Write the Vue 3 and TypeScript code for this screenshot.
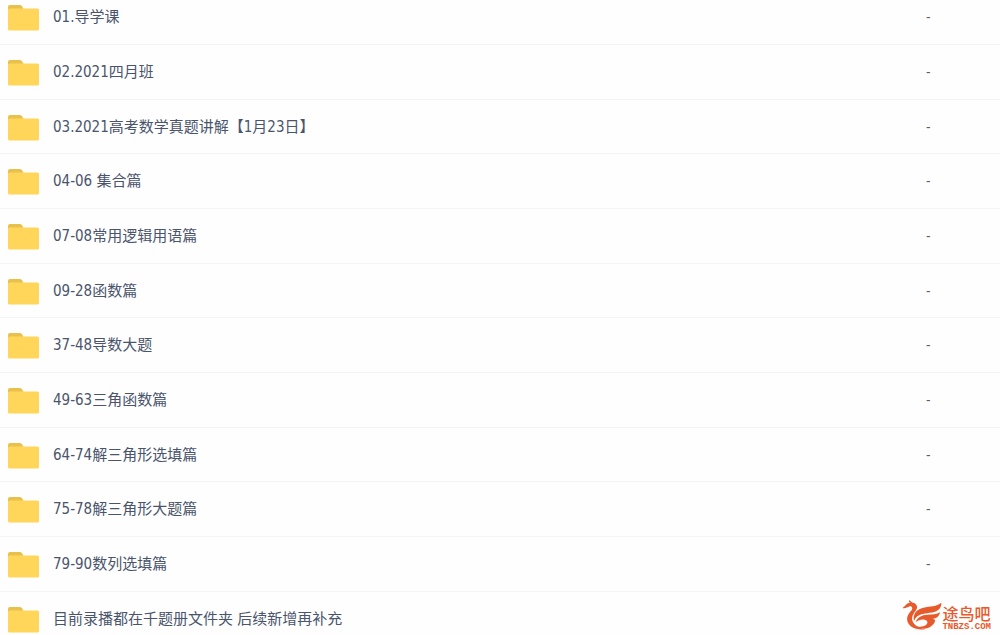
<script setup lang="ts">
interface FileRow {
  name: string
  size: string
}

const rows: FileRow[] = [
  { name: '01.导学课', size: '-' },
  { name: '02.2021四月班', size: '-' },
  { name: '03.2021高考数学真题讲解【1月23日】', size: '-' },
  { name: '04-06 集合篇', size: '-' },
  { name: '07-08常用逻辑用语篇', size: '-' },
  { name: '09-28函数篇', size: '-' },
  { name: '37-48导数大题', size: '-' },
  { name: '49-63三角函数篇', size: '-' },
  { name: '64-74解三角形选填篇', size: '-' },
  { name: '75-78解三角形大题篇', size: '-' },
  { name: '79-90数列选填篇', size: '-' },
  { name: '目前录播都在千题册文件夹 后续新增再补充', size: '' },
]
</script>

<template>
  <main class="page">
    <ul class="list">
      <li v-for="row in rows" :key="row.name" class="row">
        <svg class="folder" viewBox="0 0 32 28" aria-hidden="true">
          <path d="M0 10V4Q0 2 2 2H12Q13.500 2 14.200 3.500L15.500 6V10Z" fill="#e8c04c" />
          <path d="M0 7Q0 5.500 1.500 5.500H29.500Q31 5.500 31 7V26Q31 27.500 29.500 27.500H1.500Q0 27.500 0 26Z" fill="#ffd65a" />
        </svg>
        <span class="name">{{ row.name }}</span>
        <span class="size">{{ row.size }}</span>
      </li>
    </ul>
    <div class="brand">
      <svg class="bird" viewBox="36 28 123 93" aria-hidden="true">
        <g fill="#e65a2c">
          <path d="M37 53C44 49 47 43 53 39C56 37 59 36 62 37C57 35 56 31 60 28C62 33 66 35 71 37C82 41 86 51 79 60C71 70 65 80 68 92C72 106 88 114 108 118C80 123 55 111 52 91C50 77 59 67 66 59C70 53 66 47 59 48C52 49 47 56 37 53Z" />
          <path d="M73 93C68 71 81 57 102 52C123 48 142 49 157 37C158 53 147 64 129 67C106 70 82 70 73 93Z" />
          <path d="M78 97C83 81 97 75 114 74C130 73 143 72 153 66C151 79 141 85 131 86C140 89 139 94 134 101C124 116 103 123 79 110C98 112 112 107 114 98C116 88 93 83 78 97Z" />
        </g>
      </svg>
      <div class="words">
        <span class="title">途鸟吧</span>
        <span class="domain">TNBZS.COM</span>
      </div>
    </div>
  </main>
</template>

<style>
body {
  margin: 0;
  background: #fefefe;
}
</style>

<style scoped>
.page {
  position: relative;
  height: 100vh;
  overflow: hidden;
  font-family: "DejaVu Sans Condensed", "Noto Sans CJK SC", sans-serif;
  color: #4a556c;
}

/* The list is scrolled a little past its first row's top edge. */
.list {
  list-style: none;
  margin: -10px 0 0;
  padding: 0;
}

.row {
  box-sizing: border-box;
  display: flex;
  align-items: center;
  height: 55px;
  padding: 0 8px;
  border-bottom: 1px solid #f3f4f6;
}

.row:nth-child(3n) {
  height: 54px;
}

.folder {
  flex: none;
  width: 32px;
  height: 28px;
  margin-right: 13px;
}

.name {
  flex: 1;
  font-size: 15px;
  line-height: 20px;
  white-space: nowrap;
}

.size {
  width: 66px;
  font-size: 14px;
  line-height: 20px;
  color: #5a5f69;
}

.brand {
  position: absolute;
  right: 9px;
  bottom: 4px;
  display: flex;
  align-items: center;
  color: #e65a2c;
}

.bird {
  width: 40px;
  height: 32px;
}

.words {
  display: flex;
  flex-direction: column;
  padding-top: 8px;
}

.title {
  font-size: 16px;
  font-weight: 500;
  line-height: 16px;
}

.domain {
  font-family: "Liberation Mono", monospace;
  font-size: 9px;
  font-weight: 700;
  line-height: 8px;
}
</style>
